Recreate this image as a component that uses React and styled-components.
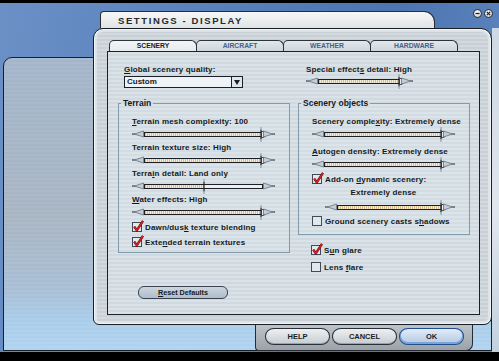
import React from "react";
import styled, { createGlobalStyle } from "styled-components";

const GlobalStyle = createGlobalStyle`
  html, body {
    margin: 0;
    padding: 0;
    background: #000;
  }
  body {
    width: 499px;
    height: 361px;
    overflow: hidden;
    font-family: "Liberation Sans", Arial, sans-serif;
  }
`;

const stripes = (a, b) =>
  `repeating-linear-gradient(180deg, ${a} 0px, ${a} 2px, ${b} 2px, ${b} 4px)`;

const Screen = styled.div`
  width: 499px;
  height: 361px;
  box-sizing: border-box;
  padding-top: 3px;
  background: #000;
`;

const Desktop = styled.div`
  height: 349px;
  display: grid;
  grid-template-columns: 3px 90px 1fr 7px;
  grid-template-rows: 8px 46px 1fr;
  background:
    linear-gradient(180deg, transparent 25px, #cdd8e3 25px, #dfe6ee 60%, #c3d1df) right top / 7px 100% no-repeat,
    linear-gradient(100deg, #6b90c6 0%, #5a82bd 35%, #4c75b1 70%, #5f87c0 100%);
`;

const BackPanel = styled.div`
  grid-column: 2 / 4;
  grid-row: 3;
  margin-bottom: 1px;
  border: 1px solid #18202c;
  border-top-left-radius: 9px;
  background:
    repeating-linear-gradient(180deg, rgba(255, 255, 255, 0.06) 0 2px, transparent 2px 4px),
    linear-gradient(180deg, #a4b5cb 0%, #a8b5c3 55%, #a8bfd6 80%, #a9cdea 90%, #b0d3ee 100%);
`;

const Dialog = styled.div`
  grid-column: 3;
  grid-row: 2 / 4;
  z-index: 1;
  display: flex;
  flex-direction: column;
`;

const TitleRow = styled.div`
  display: flex;
  align-items: flex-start;
  height: 17px;
  padding-left: 7px;
`;

const TitleTab = styled.div`
  width: 335px;
  height: 17px;
  box-sizing: border-box;
  border: 1px solid #2a2e33;
  border-bottom: none;
  border-radius: 4px 11px 0 0;
  background: linear-gradient(180deg, #f6f7f7 0%, #e9eced 60%, #dfe3e5 100%);
  padding-left: 17px;
  font-size: 9.5px;
  font-weight: bold;
  letter-spacing: 1.6px;
  line-height: 17px;
  color: #25282c;
`;

const WinControls = styled.div`
  margin-left: auto;
  margin-top: -2px;
  margin-right: -1px;
  display: flex;
  gap: 2px;
`;

const WinButton = styled.div`
  width: 9px;
  height: 9px;
  box-sizing: border-box;
  border-radius: 50%;
  border: 1px solid #2c3137;
  background: radial-gradient(circle at 40% 35%, #ffffff, #c3c9cf);
  display: grid;
  place-items: center;
`;

const Window = styled.div`
  height: 297px;
  box-sizing: border-box;
  border: 1px solid #1b1f24;
  border-radius: 10px 11px 8px 6px;
  padding: 11px 11px 9px 13px;
  display: flex;
  flex-direction: column;
  background: ${stripes("#d3dadf", "#c9d1d7")};
  box-shadow: inset 0 0 0 1px #f2f5f7, inset 0 0 0 3px #dde3e7;
`;

const TabRow = styled.div`
  display: flex;
  height: 11px;
  padding-left: 2px;
`;

const Tab = styled.div`
  width: 88px;
  height: 11px;
  box-sizing: border-box;
  margin-right: -1px;
  border: 1px solid #2d343b;
  border-bottom: none;
  border-radius: 5px 6px 0 0;
  background: ${(p) =>
    p.$active
      ? "linear-gradient(180deg, #f3f5f6, #e6ebee)"
      : "linear-gradient(180deg, #e2e8eb, #cdd6dc)"};
  color: ${(p) => (p.$active ? "#1b2027" : "#45608a")};
  font-size: 6.8px;
  font-weight: bold;
  line-height: 10px;
  text-align: center;
`;

const Panel = styled.div`
  flex: 1;
  border: 1px solid #1d2228;
  display: grid;
  grid-template-columns: 172px 172px;
  column-gap: 8px;
  align-items: start;
  padding: 12px 9px 0 10px;
  background: ${stripes("#dae2e7", "#d0d9df")};
`;

const Column = styled.div`
  display: flex;
  flex-direction: column;
`;

const Label = styled.div`
  font-size: 8px;
  font-weight: bold;
  letter-spacing: 0.15px;
  line-height: 12px;
  height: 12px;
  color: #151a21;
  white-space: nowrap;
  margin-left: ${(p) => p.$indent || 0}px;
  margin-top: ${(p) => p.$gap || 0}px;
  text-align: ${(p) => (p.$center ? "center" : "left")};
  u {
    text-decoration-thickness: 1px;
    text-underline-offset: 1px;
  }
`;

const Select = styled.div`
  display: flex;
  width: 119px;
  height: 12px;
  box-sizing: border-box;
  margin-left: 6px;
  border: 1px solid #1c2026;
  background: #eef3f8;
`;

const SelectValue = styled.div`
  padding-left: 2px;
  font-size: 8px;
  font-weight: bold;
  line-height: 10px;
  color: #151a21;
`;

const SelectArrow = styled.div`
  margin-left: auto;
  width: 10px;
  border-left: 1px solid #1c2026;
  background: #dfe6ed;
  display: grid;
  place-items: center;
`;

const Group = styled.fieldset`
  margin: ${(p) => p.$top || 0}px 0 0;
  padding: 0 14px ${(p) => p.$bottom || 4}px 13px;
  border: 1px solid #829cad;
  min-width: 0;
  display: flex;
  flex-direction: column;
  background: ${stripes("#dbe4e9", "#d3dce2")};
`;

const Legend = styled.legend`
  margin-left: -11px;
  padding: 0 2px;
  font-size: 8.5px;
  font-weight: bold;
  line-height: 12px;
  color: #151a21;
`;

const SliderRow = styled.div`
  display: flex;
  align-items: center;
  height: 12px;
  width: ${(p) => p.$width}px;
  margin-left: ${(p) => p.$indent || 0}px;
  margin-top: ${(p) => p.$gap || 0}px;
`;

const Cone = styled.svg`
  width: 12px;
  height: 12px;
  flex: none;
  transform: ${(p) => (p.$flip ? "scaleX(-1)" : "none")};
`;

const Track = styled.div`
  flex: 1;
  height: 5px;
  box-sizing: border-box;
  border: 1px solid #1c2026;
  background: #eef0ef;
  position: relative;
`;

const Fill = styled.div`
  height: 100%;
  background: repeating-linear-gradient(90deg, #d6bf96 0 1px, #f4ebd8 1px 2px);
`;

const Thumb = styled.svg`
  position: absolute;
  top: -6px;
  width: 8px;
  height: 15px;
  margin-left: -3px;
`;

const CheckRow = styled.div`
  display: flex;
  align-items: center;
  gap: 3px;
  height: 12px;
  margin-left: ${(p) => p.$indent || 0}px;
  margin-top: ${(p) => p.$gap || 0}px;
  font-size: 8px;
  font-weight: bold;
  letter-spacing: 0.15px;
  color: #151a21;
  white-space: nowrap;
`;

const Box = styled.div`
  position: relative;
  width: 10px;
  height: 10px;
  box-sizing: border-box;
  border: 1px solid #3f4c58;
  background: #e1e9ef;
  flex: none;
`;

const Tick = styled.svg`
  position: absolute;
  left: 0px;
  top: -3px;
  width: 11px;
  height: 12px;
`;

const ResetButton = styled.div`
  width: 90px;
  height: 13px;
  box-sizing: border-box;
  margin: 33px 0 0 20px;
  border: 1px solid #3a4450;
  border-radius: 6px;
  background: linear-gradient(180deg, #cdd6de, #aebccb);
  font-size: 7.2px;
  font-weight: bold;
  line-height: 11px;
  text-align: center;
  color: #151a21;
`;

const ButtonBar = styled.div`
  width: 218px;
  height: 26px;
  box-sizing: border-box;
  margin-left: 162px;
  border: 1px solid #262b31;
  border-top: none;
  border-radius: 0 0 7px 4px;
  background: linear-gradient(180deg, #bcc3ca, #9ba2aa);
  display: flex;
  gap: 2px;
  padding: 3px 0 0 9px;
`;

const BarButton = styled.div`
  width: 65px;
  height: 17px;
  box-sizing: border-box;
  border: 1px solid ${(p) => (p.$primary ? "#1f4f8f" : "#2a3037")};
  border-radius: 9px / 8px;
  background: ${(p) =>
    p.$primary
      ? "linear-gradient(180deg, #e3ecf7, #b2c8e3)"
      : "linear-gradient(180deg, #eef0f2, #c6ccd2)"};
  box-shadow: ${(p) => (p.$primary ? "inset 0 -1px 0 1px #7fa3d3" : "inset 0 -1px 0 #9aa2ab")};
  font-size: 7.5px;
  font-weight: bold;
  line-height: 15px;
  text-align: center;
  color: #1a1f26;
`;

function ConeIcon({ flip }) {
  return (
    <Cone viewBox="0 0 12 12" $flip={flip}>
      <polygon
        points="0,5.5 4,5.5 11.5,3 11.5,9 4,6.5 0,6.5"
        fill="#c3ced9"
        stroke="#56616d"
        strokeWidth="0.7"
      />
    </Cone>
  );
}

function Slider({ value = 1, width = 143, indent = 0, gap = 0 }) {
  const pct = `${value * 100}%`;
  const end = value >= 1;
  return (
    <SliderRow $width={width} $indent={indent} $gap={gap}>
      <ConeIcon />
      <Track>
        <Fill style={{ width: pct }} />
        <Thumb viewBox="0 0 8 15" style={{ left: pct, marginLeft: end ? -4 : -3 }}>
          <line x1="3" y1="0" x2="3" y2="2" stroke="#8a949e" strokeWidth="1" />
          <line x1="3" y1="13" x2="3" y2="15" stroke="#8a949e" strokeWidth="1" />
          <line x1="3" y1="2.5" x2="3" y2="12.5" stroke="#1c2026" strokeWidth="1.2" />
          {end && (
            <path
              d="M3.5 4.5 H5 A2.3 3 0 0 1 5 10.5 H3.5 Z"
              fill="#e9ecee"
              stroke="#1c2026"
              strokeWidth="0.8"
            />
          )}
        </Thumb>
      </Track>
      <ConeIcon flip />
    </SliderRow>
  );
}

function Check({ checked, children, indent, gap }) {
  return (
    <CheckRow $indent={indent} $gap={gap}>
      <Box>
        {checked && (
          <Tick viewBox="0 0 11 12">
            <path d="M1.2 6.6 L3.8 10.3 L10 0.8" fill="none" stroke="#6a0c0c" strokeWidth="2.4" />
            <path d="M1.2 6.6 L3.8 10.3 L10 0.8" fill="none" stroke="#d42222" strokeWidth="1.5" />
          </Tick>
        )}
      </Box>
      <span>{children}</span>
    </CheckRow>
  );
}

export default function App() {
  return (
    <>
      <GlobalStyle />
      <Screen>
        <Desktop>
          <BackPanel />
          <Dialog>
            <TitleRow>
              <TitleTab>SETTINGS - DISPLAY</TitleTab>
              <WinControls>
                <WinButton>
                  <svg width="5" height="5" viewBox="0 0 5 5">
                    <line x1="0.5" y1="2.5" x2="4.5" y2="2.5" stroke="#222" strokeWidth="1.3" />
                  </svg>
                </WinButton>
                <WinButton>
                  <svg width="5" height="5" viewBox="0 0 5 5">
                    <path d="M0.8 0.8 L4.2 4.2 M4.2 0.8 L0.8 4.2" stroke="#222" strokeWidth="1.2" />
                  </svg>
                </WinButton>
              </WinControls>
            </TitleRow>

            <Window>
              <TabRow>
                <Tab $active>SCENERY</Tab>
                <Tab>AIRCRAFT</Tab>
                <Tab>WEATHER</Tab>
                <Tab>HARDWARE</Tab>
              </TabRow>

              <Panel>
                <Column>
                  <Label $indent={6}>
                    <u>G</u>lobal scenery quality:
                  </Label>
                  <Select>
                    <SelectValue>Custom</SelectValue>
                    <SelectArrow>
                      <svg width="6" height="5" viewBox="0 0 6 5">
                        <polygon points="0,0 6,0 3,5" fill="#1a1f26" />
                      </svg>
                    </SelectArrow>
                  </Select>

                  <Group $top={9}>
                    <Legend>Terrain</Legend>
                    <Label $gap={7}>
                      <u>T</u>errain mesh complexity: 100
                    </Label>
                    <Slider value={1} />
                    <Label $gap={2}>Terrain texture size: High</Label>
                    <Slider value={1} />
                    <Label $gap={2}>
                      Terra<u>i</u>n detail: Land only
                    </Label>
                    <Slider value={0.5} />
                    <Label $gap={2}>
                      <u>W</u>ater effects: High
                    </Label>
                    <Slider value={1} />
                    <Check checked gap={3}>
                      Dawn/dus<u>k</u> texture blending
                    </Check>
                    <Check checked gap={3}>
                      Exte<u>n</u>ded terrain textures
                    </Check>
                  </Group>

                  <ResetButton>
                    <u>R</u>eset Defaults
                  </ResetButton>
                </Column>

                <Column>
                  <Label $indent={8}>
                    Special effect<u>s</u> detail: High
                  </Label>
                  <Slider value={1} width={107} indent={8} gap={-1} />

                  <Group $top={10} $bottom={7}>
                    <Legend>Scenery objects</Legend>
                    <Label $gap={7}>
                      Scenery comple<u>x</u>ity: Extremely dense
                    </Label>
                    <Slider value={1} />
                    <Label $gap={6}>
                      <u>A</u>utogen density: Extremely dense
                    </Label>
                    <Slider value={1} />
                    <Check checked gap={3}>
                      Add-on <u>d</u>ynamic scenery:
                    </Check>
                    <Label $center $gap={2}>
                      Extremely dense
                    </Label>
                    <Slider value={1} width={130} indent={13} gap={2} />
                    <Check gap={2}>
                      Ground scenery casts s<u>h</u>adows
                    </Check>
                  </Group>

                  <Check checked indent={13} gap={9}>
                    S<u>u</u>n glare
                  </Check>
                  <Check indent={13} gap={5}>
                    Lens <u>f</u>lare
                  </Check>
                </Column>
              </Panel>
            </Window>

            <ButtonBar>
              <BarButton>HELP</BarButton>
              <BarButton>CANCEL</BarButton>
              <BarButton $primary>OK</BarButton>
            </ButtonBar>
          </Dialog>
        </Desktop>
      </Screen>
    </>
  );
}
